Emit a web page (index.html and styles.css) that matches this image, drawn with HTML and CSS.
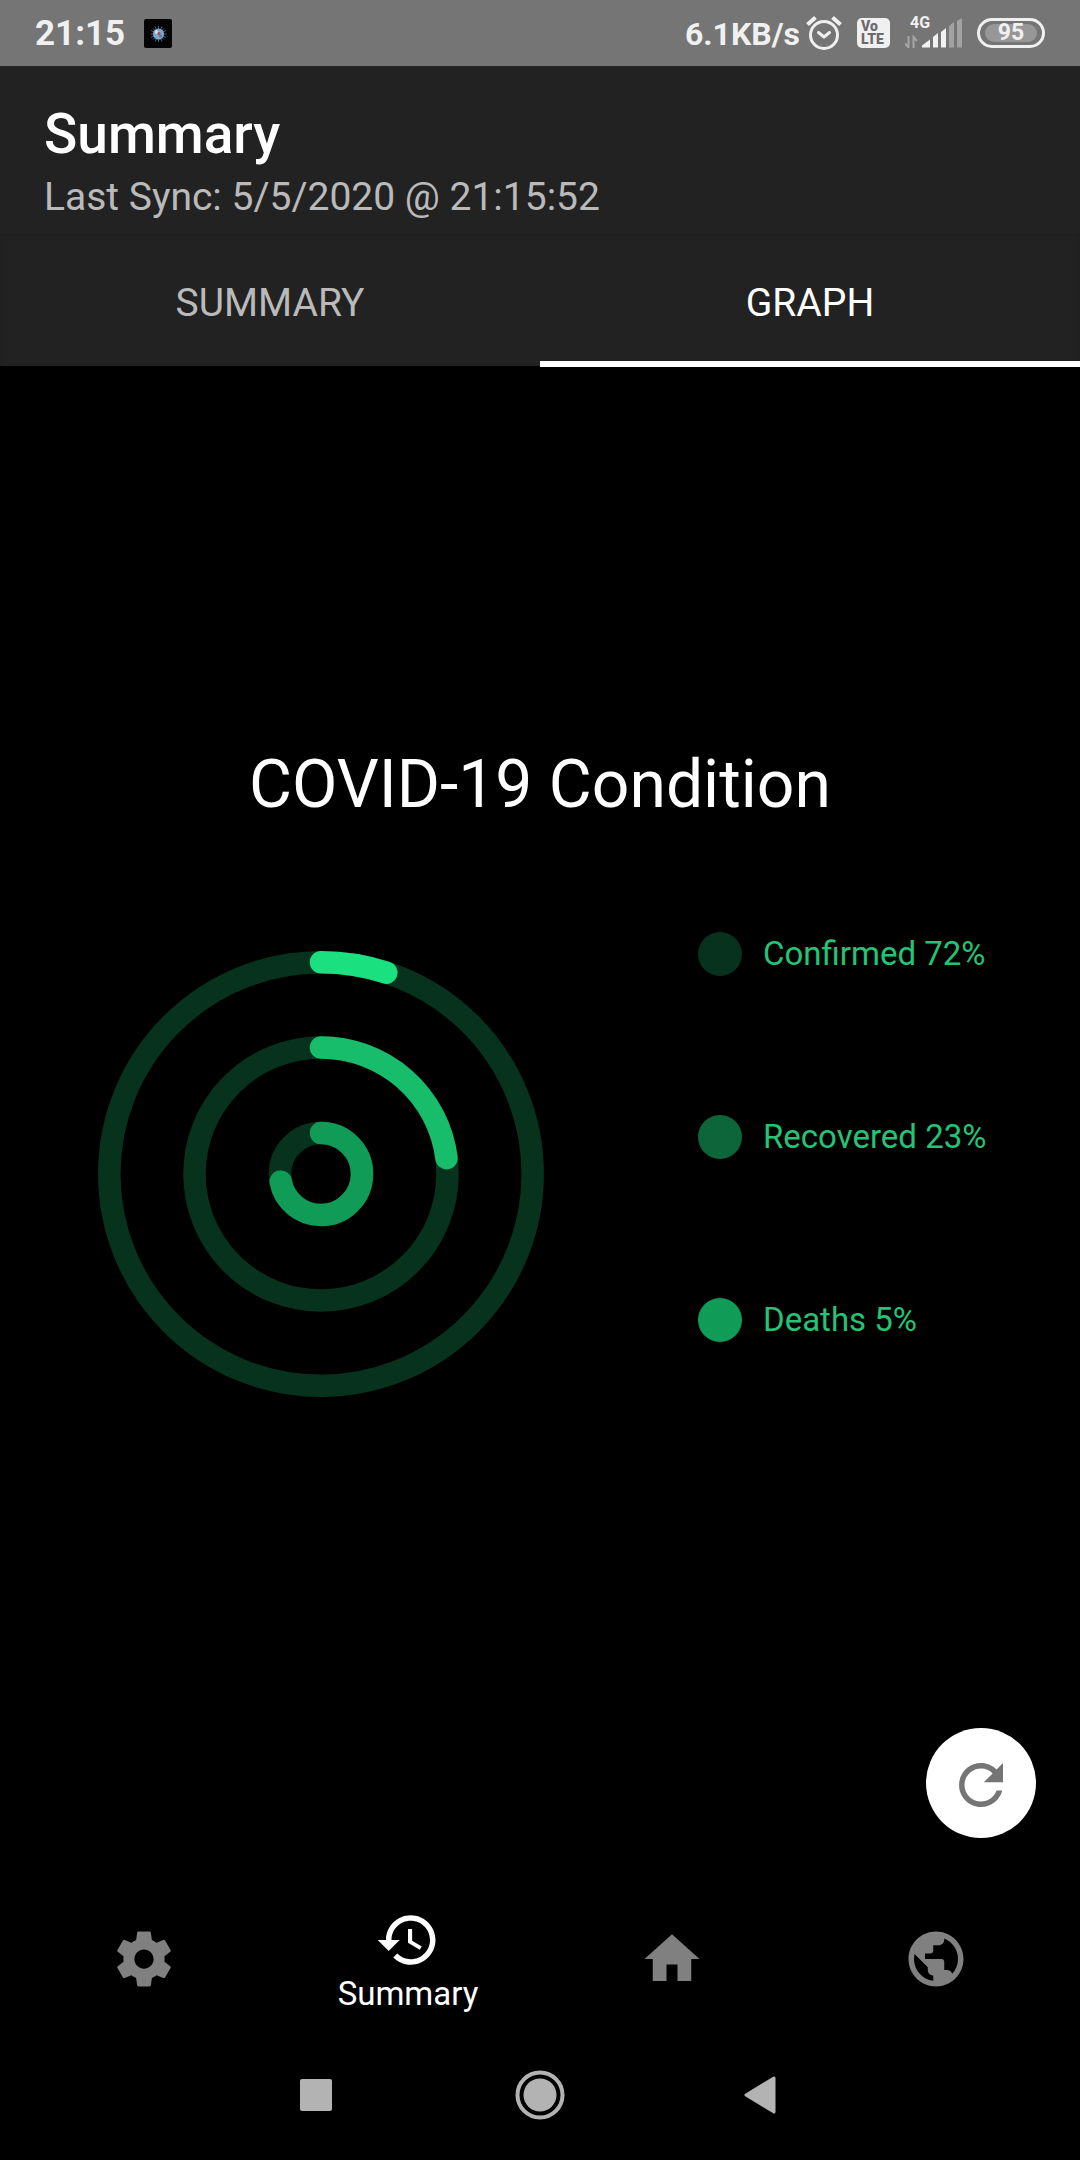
FILE: index.html
```html
<!DOCTYPE html>
<html lang="en">
<head>
<meta charset="utf-8">
<meta name="viewport" content="width=device-width, initial-scale=1">
<title>Summary</title>
<link rel="stylesheet" href="styles.css">
</head>
<body>
<div class="status">
  <time class="clock">21:15</time>
  <svg class="virus" width="28" height="29" viewBox="0 0 28 29" aria-hidden="true">
    <rect width="28" height="29" rx="2" fill="#050505"/>
    <path d="M14.500 7v16M6.500 15h16M9 9.500l11 11M20 9.500l-11 11M11 7.500l7 15M18 7.500l-7 15M7 11.500l15 7M22 11.500l-15 7" stroke="#46637f" stroke-width="1"/>
    <circle cx="14.500" cy="15" r="5.500" fill="#7fa6cc"/>
    <circle cx="12.500" cy="13" r="2" fill="#c3d8ea"/>
    <circle cx="15" cy="14.500" r="1.500" fill="#a8484a"/>
    <circle cx="16.500" cy="17" r="1.500" fill="#4c7fb4"/>
  </svg>
  <div class="indicators">
    <span class="speed">6.1KB/s</span>
    <svg width="36" height="36" viewBox="0 0 36 36" fill="none" stroke="#f0f0f0" stroke-width="3" aria-hidden="true">
      <circle cx="18" cy="20" r="13.500"/>
      <path d="M12.500 17.500l5.500 4.500 5.500-4.500" stroke-linecap="round" stroke-linejoin="round"/>
      <path d="M1.500 9.500l8-7M34.500 9.500l-8-7" stroke-width="4"/>
    </svg>
    <div class="volte"><span>Vo</span><span>LTE</span></div>
    <div class="signal">
      <span class="network">4G</span>
      <svg width="57" height="30" viewBox="0 0 57 30" aria-hidden="true">
        <path d="M3.500 18v11.500L0 25.500M8.500 30V19l3.500 4" fill="none" stroke="#a5a5a5" stroke-width="2"/>
        <path d="M17 29.500v-2l8-6v8zM28 29.500V19l5-4v14.500zM36 29.500V14l5-4v19.500z" fill="#f2f2f2"/>
        <path d="M44 29.500V8l5-4v25.500zM52 29.500V3l5-3v29.500z" fill="#a2a2a2"/>
      </svg>
    </div>
    <div class="battery"><span>95</span></div>
  </div>
</div>

<header class="appbar">
  <h1>Summary</h1>
  <p>Last Sync: 5/5/2020 @ 21:15:52</p>
</header>

<div class="tabs" role="tablist">
  <button class="tab" role="tab" aria-selected="false">SUMMARY</button>
  <button class="tab active" role="tab" aria-selected="true">GRAPH</button>
</div>

<main>
  <h2>COVID-19 Condition</h2>
  <div class="chart">
    <svg class="rings" width="446" height="446" viewBox="-223 -223 446 446" role="img" aria-label="Deaths 5%, recovered 23%, confirmed 72%">
      <g fill="none" stroke-width="22.500">
        <g stroke="#06321e">
          <circle r="211.700"/><circle r="126.500"/><circle r="41"/>
        </g>
        <g stroke-linecap="round" transform="rotate(-90)">
          <circle r="211.700" pathLength="100" stroke-dasharray="5 95" stroke="#1ae07f"/>
          <circle r="126.500" pathLength="100" stroke-dasharray="23 77" stroke="#17bd6b"/>
          <circle r="41" pathLength="100" stroke-dasharray="72 28" stroke="#109b57"/>
        </g>
      </g>
    </svg>
    <ul class="legend">
      <li><i class="dot confirmed"></i>Confirmed 72%</li>
      <li><i class="dot recovered"></i>Recovered 23%</li>
      <li><i class="dot deaths"></i>Deaths 5%</li>
    </ul>
  </div>
  <button class="fab" aria-label="Refresh">
    <svg width="66" height="66" viewBox="0 0 24 24" fill="#757575"><path d="M17.650 6.350C16.200 4.900 14.210 4 12 4c-4.420 0-7.990 3.580-7.990 8s3.570 8 7.990 8c3.730 0 6.840-2.550 7.730-6h-2.080c-.82 2.330-3.040 4-5.650 4-3.310 0-6-2.690-6-6s2.690-6 6-6c1.660 0 3.140.69 4.220 1.780L13 11h7V4l-2.350 2.350z"/></svg>
  </button>
</main>

<nav class="bottom">
  <a href="#settings" aria-label="Settings"><svg viewBox="0 0 24 24"><path d="M19.430 12.980c.04-.32.07-.64.07-.98s-.03-.66-.07-.98l2.110-1.650c.19-.15.24-.42.12-.64l-2-3.460c-.12-.22-.39-.3-.61-.22l-2.490 1c-.52-.4-1.080-.73-1.690-.98l-.38-2.650C14.460 2.180 14.250 2 14 2h-4c-.25 0-.46.18-.49.42l-.38 2.650c-.61.25-1.170.59-1.690.98l-2.490-1c-.23-.09-.49 0-.61.22l-2 3.460c-.13.22-.07.49.12.64l2.110 1.650c-.04.32-.07.65-.07.98s.03.66.07.98l-2.110 1.650c-.19.15-.24.42-.12.64l2 3.460c.12.22.39.3.61.22l2.490-1c.52.4 1.080.73 1.690.98l.38 2.650c.03.24.24.42.49.42h4c.25 0 .46-.18.49-.42l.38-2.650c.61-.25 1.170-.59 1.690-.98l2.490 1c.23.09.49 0 .61-.22l2-3.460c.12-.22.07-.49-.12-.64l-2.110-1.650zM12 15.500c-1.930 0-3.500-1.570-3.500-3.500s1.570-3.500 3.500-3.500 3.500 1.570 3.500 3.500-1.570 3.500-3.500 3.500z"/></svg></a>
  <a href="#summary" class="current" aria-current="page"><svg viewBox="0 0 24 24"><path d="M13 3c-4.970 0-9 4.030-9 9H1l3.890 3.890.07.14L9 12H6c0-3.870 3.130-7 7-7s7 3.130 7 7-3.130 7-7 7c-1.930 0-3.680-.79-4.940-2.060l-1.420 1.420C8.270 19.990 10.510 21 13 21c4.970 0 9-4.030 9-9s-4.030-9-9-9zm-1 5v5l4.280 2.540.72-1.210-3.500-2.080V8H12z"/></svg><span>Summary</span></a>
  <a href="#home" aria-label="Home"><svg viewBox="0 0 24 24"><path d="M10 20v-6h4v6h5v-8h3L12 3 2 12h3v8z"/></svg></a>
  <a href="#world" aria-label="World"><svg viewBox="0 0 24 24"><path d="M12 2C6.480 2 2 6.480 2 12s4.480 10 10 10 10-4.480 10-10S17.520 2 12 2zm-1 17.930c-3.950-.49-7-3.850-7-7.930 0-.62.08-1.210.21-1.790L9 15v1c0 1.100.9 2 2 2v1.930zm6.900-2.540c-.26-.81-1-1.390-1.900-1.390h-1v-3c0-.55-.45-1-1-1H8v-2h2c.55 0 1-.45 1-1V7h2c1.100 0 2-.9 2-2v-.41c2.930 1.190 5 4.060 5 7.410 0 2.080-.8 3.970-2.100 5.390z"/></svg></a>
</nav>

<div class="system">
  <button aria-label="Recent apps"><svg width="50" height="50" viewBox="0 0 50 50"><rect x="9" y="9" width="32" height="32" rx="2"/></svg></button>
  <button aria-label="Home screen"><svg width="50" height="50" viewBox="0 0 50 50"><circle cx="25" cy="25" r="16.500"/><circle cx="25" cy="25" r="22.500" fill="none" stroke="#b3b3b3" stroke-width="4"/></svg></button>
  <button aria-label="Back"><svg width="50" height="50" viewBox="0 0 50 50"><path d="M7 25L35 8v34z" stroke="#b3b3b3" stroke-width="3" stroke-linejoin="round"/></svg></button>
</div>
</body>
</html>
```
FILE: styles.css
```css
* { box-sizing: border-box; margin: 0; padding: 0; }
body {
  display: flex;
  flex-direction: column;
  min-height: 100vh;
  background: #000;
  color: #fff;
  font-family: Roboto, sans-serif;
}
button { border: 0; background: none; font: inherit; color: inherit; }
svg { display: block; }

.status {
  display: flex;
  align-items: center;
  height: 66px;
  padding: 0 35px;
  background: #757575;
  color: #f0f0f0;
  font-weight: 700;
}
.clock { padding-top: 2px; font-size: 35px; line-height: 40px; }
.virus { margin-left: 19px; }
.indicators { display: flex; align-items: center; gap: 15px; margin-left: auto; }
.speed { margin-right: -9px; padding-top: 2px; font-size: 32px; line-height: 40px; }
.volte {
  display: grid;
  width: 33px;
  height: 30px;
  padding: 2px 4px;
  border-radius: 5px;
  background: #f0f0f0;
  color: #6b6b6b;
  font-size: 14px;
  font-weight: 900;
  line-height: 13px;
}
.signal { position: relative; }
.network { position: absolute; left: 5px; top: -3px; font-size: 16px; line-height: 16px; }
.battery {
  width: 68px;
  height: 30px;
  padding: 3px 5px;
  border: 3px solid #f0f0f0;
  border-radius: 15px;
}
.battery span {
  display: block;
  border-radius: 9px;
  background: #979797;
  font-size: 23px;
  line-height: 18px;
  text-align: center;
}

.appbar { padding: 36px 44px 14px; background: #222; }
.appbar h1 { font-size: 55px; font-weight: 500; line-height: 64px; }
.appbar p { margin-top: 8px; font-size: 39px; line-height: 46px; color: #bababa; }

.tabs {
  display: flex;
  height: 132px;
  background: #222;
  box-shadow: inset 0 2px 3px #1f1f1f;
}
.tab {
  position: relative;
  flex: 1;
  padding-top: 5px;
  font-size: 39px;
  line-height: 46px;
  color: #bababa;
}
.tab.active { color: #fff; }
.tab.active::after {
  content: "";
  position: absolute;
  right: 0;
  bottom: -1px;
  left: 0;
  height: 6px;
  background: #fff;
}

main { position: relative; flex: 1; padding-top: 380px; }
h2 { font-size: 66px; font-weight: 400; line-height: 78px; text-align: center; }
.chart { display: grid; grid-template-columns: 16fr 11fr; align-items: start; margin-top: 108px; }
.rings { justify-self: center; margin: 19px 0 0 1px; }
.legend {
  display: grid;
  gap: 139px;
  padding-left: 58px;
  list-style: none;
  font-size: 33px;
  line-height: 44px;
  color: #23c476;
}
.legend li { display: flex; align-items: center; gap: 21px; }
.dot { width: 44px; height: 44px; border-radius: 50%; }
.confirmed { background: #06321e; }
.recovered { background: #0c663a; }
.deaths { background: #109b57; }

.fab {
  position: absolute;
  right: 44px;
  bottom: 50px;
  display: grid;
  place-items: center;
  width: 110px;
  height: 110px;
  padding-top: 4px;
  border-radius: 50%;
  background: #fff;
}

.bottom { display: flex; height: 142px; padding: 0 12px; }
.bottom a {
  display: flex;
  flex: 1;
  flex-direction: column;
  align-items: center;
  justify-content: center;
  gap: 2px;
  color: #808080;
  font-size: 33px;
  line-height: 38px;
  text-decoration: none;
}
.bottom a.current { padding-top: 2px; color: #fff; }
.bottom svg { width: 66px; height: 66px; fill: currentColor; }

.system { display: flex; align-items: center; justify-content: center; gap: 174px; height: 130px; }
.system svg { fill: #b3b3b3; }
```
